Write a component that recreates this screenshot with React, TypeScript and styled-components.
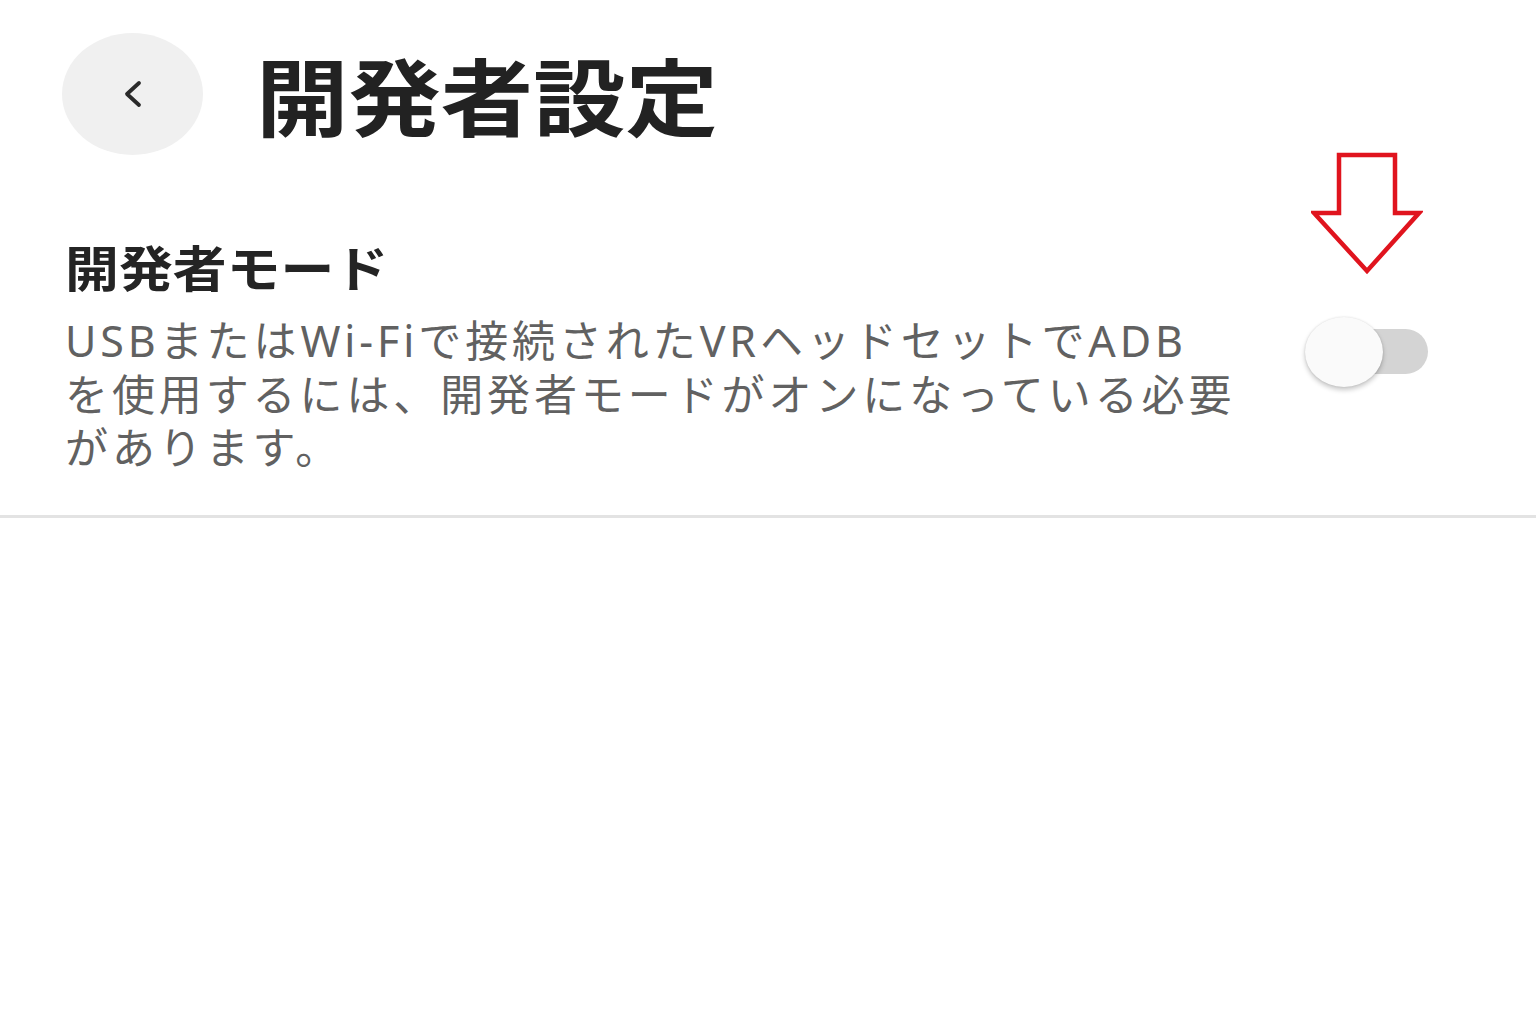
import React from "react"
import styled, { createGlobalStyle } from "styled-components"

const GlobalStyle = createGlobalStyle`
  html, body {
    margin: 0;
    padding: 0;
    background: #ffffff;
  }
  body {
    font-family: "Noto Sans", "Noto Sans CJK JP", sans-serif;
  }
`

const Page = styled.div`
  width: 1536px;
  min-height: 1024px;
  background: #ffffff;
`

const Header = styled.header`
  display: flex;
  align-items: center;
  padding: 33px 0 0 62px;
`

const BackButton = styled.button`
  width: 141px;
  height: 122px;
  border: none;
  border-radius: 50%;
  background: #f0f0f0;
  display: flex;
  align-items: center;
  justify-content: center;
  padding: 0;
  cursor: pointer;
`

// headings are drawn a little wide, the way the device renders them
const PageTitle = styled.h1`
  margin: 0 0 0 53px;
  font-family: "Noto Sans CJK JP", sans-serif;
  font-size: 84px;
  line-height: 1;
  font-weight: 700;
  color: #222222;
  transform: scaleX(1.1);
  transform-origin: left center;
`

const Section = styled.section`
  display: flex;
  align-items: flex-start;
  justify-content: space-between;
  padding: 81px 108px 40px 65px;
  border-bottom: 3px solid #e3e3e3;
`

const TextColumn = styled.div`
  display: flex;
  flex-direction: column;
`

const SettingTitle = styled.h2`
  margin: 0;
  font-family: "Noto Sans CJK JP", sans-serif;
  font-size: 49px;
  line-height: 60px;
  font-weight: 700;
  color: #242424;
  transform: scaleX(1.1);
  transform-origin: left center;
`

const Description = styled.p`
  margin: 18px 0 0;
  font-size: 43px;
  letter-spacing: 3.9px;
  line-height: 53.5px;
  font-weight: 400;
  color: #616161;
  white-space: nowrap;
`

const ToggleSlot = styled.div`
  position: relative;
  width: 123px;
  height: 70px;
  margin-top: 81px;
`

const Track = styled.div<{ $on: boolean }>`
  position: absolute;
  left: 13px;
  right: 0;
  top: 12px;
  height: 45px;
  border-radius: 23px;
  background: ${(p) => (p.$on ? "#9fb8ff" : "#d4d4d4")};
`

const Thumb = styled.div<{ $on: boolean }>`
  position: absolute;
  top: 0;
  left: ${(p) => (p.$on ? "45px" : "0")};
  width: 78px;
  height: 70px;
  border-radius: 50%;
  background: #fafafa;
  box-shadow: 0 3px 5px rgba(0, 0, 0, 0.22), 0 0 2px rgba(0, 0, 0, 0.12);
`

const Pointer = styled.svg`
  position: absolute;
  left: 6px;
  bottom: 100%;
  margin-bottom: 42px;
`

const ChevronLeft = () => (
  <svg width="24" height="32" viewBox="0 0 24 32" fill="none">
    <path d="M18 5 L6 16 L18 27" stroke="#2a2a2a" strokeWidth="3.8" strokeLinecap="round" strokeLinejoin="round" />
  </svg>
)

const Toggle = ({ on }: { on: boolean }) => (
  <ToggleSlot>
    <Pointer width="112" height="124" viewBox="0 0 112 124">
      <path
        d="M28 4 H84 V62 H108 L56 120 L3 62 H28 Z"
        fill="none"
        stroke="#e0141e"
        strokeWidth="4.5"
        strokeLinejoin="miter"
      />
    </Pointer>
    <Track $on={on} />
    <Thumb $on={on} />
  </ToggleSlot>
)

const App = () => {
  return (
    <Page>
      <GlobalStyle />
      <Header>
        <BackButton aria-label="戻る">
          <ChevronLeft />
        </BackButton>
        <PageTitle>開発者設定</PageTitle>
      </Header>
      <Section>
        <TextColumn>
          <SettingTitle>開発者モード</SettingTitle>
          <Description>
            USBまたはWi-Fiで接続されたVRヘッドセットでADB
            <br />
            を使用するには、開発者モードがオンになっている必要
            <br />
            があります。
          </Description>
        </TextColumn>
        <Toggle on={false} />
      </Section>
    </Page>
  )
}

export default App
